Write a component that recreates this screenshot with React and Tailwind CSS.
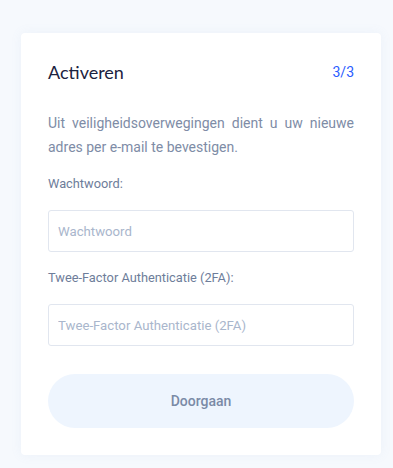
export default function App() {
  return (
    <div className="min-h-[468px] w-[393px] bg-[#f6f9fd] pt-[33px] pb-[13px]" style={{ fontFamily: "Roboto, 'Noto Sans', sans-serif" }}>
      <div className="ml-[21px] w-[360px] rounded-[4px] bg-white px-[27px] pt-[25px] pb-[27px] shadow-[0_0_12px_rgba(120,150,200,0.08)]">
        <div className="flex items-center justify-between h-[28px]">
          <h1 className="text-[18px] leading-[28px] text-[#1b2240]" style={{ fontFamily: "Lato, 'Noto Sans', sans-serif" }}>Activeren</h1>
          <span className="text-[14px] text-[#2a5cff]">3/3</span>
        </div>
        <p className="mt-[25px] text-[14px] leading-[24px] text-[#7e8ca6] text-justify">
          Uit veiligheidsoverwegingen dient u uw nieuwe adres per e-mail te bevestigen.
        </p>
        <label className="mt-[15px] block text-[12.8px] leading-[20px] text-[#6e7d9a]">Wachtwoord:</label>
        <input
          type="password"
          placeholder="Wachtwoord"
          className="mt-[16px] block h-[42px] w-full rounded-[3px] border border-[#e1e6ef] px-[9px] text-[13.2px] text-[#1b2240] placeholder:text-[#a9b6cc] outline-none"
        />
        <label className="mt-[16px] block text-[12.8px] leading-[20px] text-[#6e7d9a]">Twee-Factor Authenticatie (2FA):</label>
        <input
          type="text"
          placeholder="Twee-Factor Authenticatie (2FA)"
          className="mt-[16px] block h-[42px] w-full rounded-[3px] border border-[#e1e6ef] px-[9px] text-[13.2px] text-[#1b2240] placeholder:text-[#a9b6cc] outline-none"
        />
        <button className="mt-[28px] flex h-[54px] w-full items-center justify-center rounded-full bg-[#eef5fe] text-[14px] font-medium text-[#7a8aa6]">
          Doorgaan
        </button>
      </div>
    </div>
  );
}
